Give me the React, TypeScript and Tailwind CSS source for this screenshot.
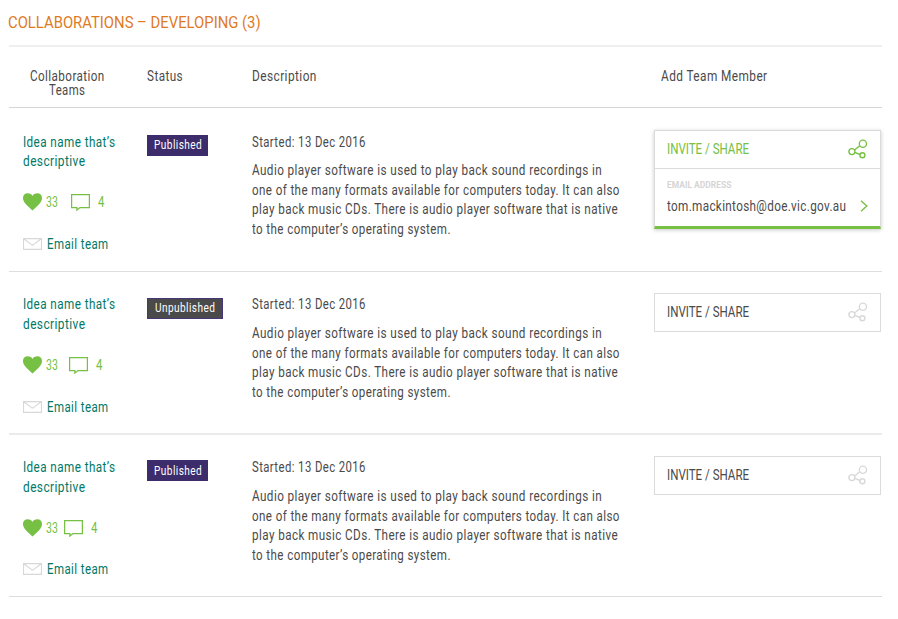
import { useLayoutEffect, useRef, useState } from 'react';
import clsx from 'clsx';

type FitProps = { w: number; className?: string; children: string };

/* A single line of text condensed horizontally to a set measure. */
function Fit({ w, className, children }: FitProps) {
  const ref = useRef<HTMLSpanElement>(null);
  const [scale, setScale] = useState(1);
  useLayoutEffect(() => {
    if (ref.current) setScale(w / ref.current.offsetWidth);
  }, [w, children]);
  return (
    <span className={clsx('block shrink-0 whitespace-nowrap', className)} style={{ width: w }}>
      <span ref={ref} className="inline-block origin-left align-top" style={{ transform: `scaleX(${scale})` }}>
        {children}
      </span>
    </span>
  );
}

function Heart() {
  return (
    <svg className="h-[18px] w-[19px] shrink-0" viewBox="0 0 19 18" fill="#76c043">
      <path d="M9.5 17.4C7.5 15.2 4.6 13.3 2.3 10.4 0.6 8.2 0 6.7 0 4.9 0 2.2 2 .3 4.6 .3 6.8 .3 8.8 1.1 9.5 2.9 10.2 1.1 12.2 .3 14.4 .3 17 .3 19 2.2 19 4.9 19 6.7 18.4 8.2 16.7 10.4 14.4 13.3 11.5 15.2 9.5 17.4Z" />
    </svg>
  );
}

function Bubble() {
  return (
    <svg className="h-[18px] w-[19px] shrink-0" viewBox="0 0 19 18" fill="none" stroke="#76c043" strokeWidth="1.25">
      <path d="M.6 1.5H18.4V14.5H8.9L5.9 17.1V14.5H.6Z" />
    </svg>
  );
}

function Envelope() {
  return (
    <svg className="h-[12px] w-[19px] shrink-0" viewBox="0 0 19 12" fill="none" stroke="#d8d8d8" strokeWidth="1.15">
      <path d="M.5 .6H18.5V11.4H.5ZM.7 .8L8.3 6.4Q9.5 7.2 10.7 6.4L18.3 .8" />
    </svg>
  );
}

function Share({ color }: { color: string }) {
  return (
    <svg className="mb-[2px] h-5 w-5 shrink-0" viewBox="0 0 20 20" fill="none" stroke={color} strokeWidth="1.35">
      <circle cx="14.9" cy="4.7" r="3.6" />
      <circle cx="3.9" cy="12.6" r="3" />
      <circle cx="14.4" cy="16.2" r="2.5" />
      <path d="M6.5 11L11.8 6.8M6.8 13.4L12 15.5" />
    </svg>
  );
}

type Row = {
  status: 'Published' | 'Unpublished';
  open: boolean;
  height: string;
  lift: string;
  badge: string;
  gap: string;
  email: string;
};

const rows: Row[] = [
  { status: 'Published', open: true, height: 'h-[163px] border-b border-[#dedede]', lift: 'mt-0', badge: 'mt-[26px]', gap: 'ml-[13px]', email: 'mt-[23px]' },
  { status: 'Unpublished', open: false, height: 'h-[163px] border-b-2 border-[#ebebeb]', lift: '-mt-px', badge: 'mt-[26px]', gap: 'ml-[11px]', email: 'mt-[23px]' },
  { status: 'Published', open: false, height: 'h-[162px] border-b border-[#dcdcdc]', lift: '-mt-px', badge: 'mt-[25px]', gap: 'ml-[6px]', email: 'mt-[22px]' },
];

function ShareCard({ open }: { open: boolean }) {
  return (
    <div
      className={clsx(
        'mt-[21px] w-[227px] border border-[#dbdbdb] bg-white',
        open && 'border-b-[3px] border-b-[#76c043] shadow-[0_1px_4px_rgba(0,0,0,0.22)]',
      )}
    >
      <div className="flex h-[37px] items-center justify-between pl-3 pr-3">
        <Fit w={82.5} className={clsx('mb-px text-[14px] leading-[20px]', open ? 'text-[#76c043]' : 'text-[#4a4a4a]')}>
          INVITE / SHARE
        </Fit>
        <Share color={open ? '#76c043' : '#d8d8d8'} />
      </div>
      {open && (
        <div className="h-[58px] border-t border-[#dbdbdb] pl-3 pt-[11px]">
          <Fit w={64} className="text-[9px] font-bold leading-[11px] text-[#d5d5d5]">EMAIL ADDRESS</Fit>
          <div className="mt-[5px] flex items-center">
            <Fit w={179} className="text-[14px] leading-[20px] tracking-[0.4px]">tom.mackintosh@doe.vic.gov.au</Fit>
            <svg className="ml-[13.5px] h-3 w-2" viewBox="0 0 8 12" fill="none" stroke="#76c043" strokeWidth="1.4">
              <path d="M1 .8L6.8 6L1 11.2" />
            </svg>
          </div>
        </div>
      )}
    </div>
  );
}

function CollaborationRow({ row }: { row: Row }) {
  const published = row.status === 'Published';
  return (
    <div className={clsx('flex text-[14px] tracking-[0.5px]', row.height)}>
      <div className="w-[138px] pl-[14px] pt-[23px] text-[#007866]">
        <div className={row.lift}>
          <Fit w={92} className="leading-[20px]">Idea name that’s</Fit>
        </div>
        <Fit w={62} className={clsx('leading-[20px]', row.lift === 'mt-0' && '-mt-px')}>descriptive</Fit>
        <div className="mt-[22px] flex h-[18px] items-center text-[14px] tracking-normal text-[#76c043]">
          <Heart />
          <Fit w={12} className="ml-1 leading-[18px]">33</Fit>
          <span className={row.gap}><Bubble /></span>
          <Fit w={6.5} className={clsx('ml-2 leading-[18px]', row.open && '-mt-px')}>4</Fit>
        </div>
        <div className={clsx('flex items-center', row.email)}>
          <Envelope />
          <Fit w={61.5} className="ml-[5px] leading-[20px]">Email team</Fit>
        </div>
      </div>
      <div className="w-[105px]">
        <div
          className={clsx(
            'flex items-center justify-center text-[12px] text-white',
            row.badge,
            published ? 'h-[20.5px] w-[61px] bg-[#3d2c6b]' : 'h-[20.5px] w-[76px] border border-[#47367a] bg-[#4a4a4a]',
          )}
        >
          <Fit w={published ? 48 : 60.5} className={clsx('leading-[18px]', published && !row.open && 'pt-[2px]')}>{row.status}</Fit>
        </div>
      </div>
      <div className="w-[402px] pt-[23px] text-[#4a4a4a]">
        <div className={row.lift}>
          <Fit w={113.5} className="leading-[20px]">Started: 13 Dec 2016</Fit>
        </div>
        <div className={clsx('leading-[19.6px]', row.open ? 'mt-[8.95px]' : 'mt-[9.95px]')}>
          <Fit w={350.5}>Audio player software is used to play back sound recordings in</Fit>
          <Fit w={368}>one of the many formats available for computers today. It can also</Fit>
          <Fit w={366}>play back music CDs. There is audio player software that is native</Fit>
          <Fit w={199}>to the computer’s operating system.</Fit>
        </div>
      </div>
      <div className="tracking-normal text-[#4a4a4a]">
        <ShareCard open={row.open} />
      </div>
    </div>
  );
}

export default function App() {
  return (
    <main className="h-[619px] w-[898px] bg-white pl-[9px] font-['Liberation_Sans_Narrow','Roboto',sans-serif]">
      <div className="w-[873px]">
        <h1 className="h-[47px] border-b-2 border-[#efefef] pt-[12px] text-[17px] text-[#e07a1f]">
          <Fit w={253} className="-ml-px leading-[20px]">COLLABORATIONS – DEVELOPING (3)</Fit>
        </h1>
        <div className="mb-px flex h-[61px] border-b border-[#d5d5d5] pt-[22px] text-[14px] leading-[14px] tracking-[0.5px] text-[#4a4a4a]">
          <div className="flex w-[116px] flex-col items-center">
            <Fit w={75}>Collaboration</Fit>
            <Fit w={36.5}>Teams</Fit>
          </div>
          <div className="ml-[22px] w-[105px]"><Fit w={36}>Status</Fit></div>
          <div className="w-[409px]"><Fit w={64.5}>Description</Fit></div>
          <Fit w={106.5}>Add Team Member</Fit>
        </div>
        {rows.map((row, i) => <CollaborationRow key={i} row={row} />)}
      </div>
    </main>
  );
}
